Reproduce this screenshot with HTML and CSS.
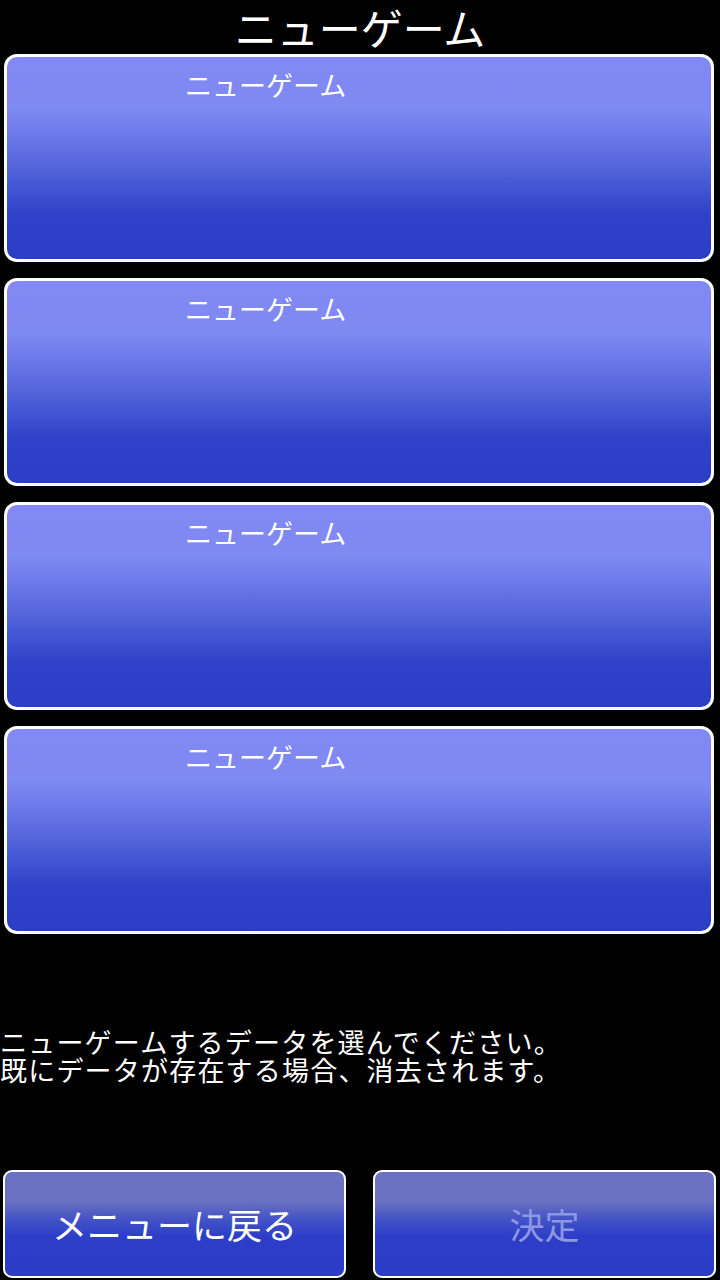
FILE: index.html
```html
<!DOCTYPE html>
<html lang="ja">
<head>
<meta charset="utf-8">
<title>ニューゲーム</title>
<link rel="stylesheet" href="styles.css">
</head>
<body>
<div class="screen">
  <h1 class="title">ニューゲーム</h1>
  <div class="slots">
    <div class="slot"><span class="slot-label">ニューゲーム</span></div>
    <div class="slot"><span class="slot-label">ニューゲーム</span></div>
    <div class="slot"><span class="slot-label">ニューゲーム</span></div>
    <div class="slot"><span class="slot-label">ニューゲーム</span></div>
  </div>
  <p class="message">ニューゲームするデータを選んでください。<br>既にデータが存在する場合、消去されます。</p>
  <div class="actions">
    <button class="btn">メニューに戻る</button>
    <button class="btn btn-disabled">決定</button>
  </div>
</div>
</body>
</html>
```

FILE: styles.css
```css
html, body {
  margin: 0;
  padding: 0;
  background: #000;
}
body {
  font-family: "Noto Sans CJK JP", "Noto Sans", sans-serif;
  color: #fff;
}
.screen {
  width: 720px;
  height: 1280px;
  display: flex;
  flex-direction: column;
  overflow: hidden;
}
.title {
  margin: 0;
  font-size: 42px;
  font-weight: 400;
  line-height: 54px;
  text-align: center;
}
.slots {
  display: flex;
  flex-direction: column;
  gap: 16px;
  padding: 0 6px 0 4px;
}
.slot {
  height: 208px;
  box-sizing: border-box;
  border: 3px solid #fff;
  border-radius: 13px;
  background: linear-gradient(to bottom, #8189f3 0%, #7f89f2 26%, #5565dc 54%, #2f41c9 78%, #2c3dc6 100%);
  padding: 13px 0 0 178px;
}
.slot-label {
  display: block;
  font-size: 27px;
  line-height: 30px;
}
.message {
  margin: 94px 0 0 0;
  font-size: 27px;
  line-height: 28px;
  letter-spacing: 1.2px;
}
.actions {
  margin-top: 86px;
  display: flex;
  gap: 27px;
  padding: 0 4px 0 3px;
}
.btn {
  flex: 1;
  height: 108px;
  border: 2px solid #fff;
  border-radius: 9px;
  background: linear-gradient(to bottom, #6b72c2 0%, #6a71c1 28%, #4453c6 45%, #2c3ec8 62%, #2b3dc6 100%);
  color: #fff;
  font-family: "Noto Sans CJK JP", "Noto Sans", sans-serif;
  font-size: 35px;
  line-height: 40px;
  padding: 0;
}
.btn-disabled {
  color: #8e97e2;
}
```
